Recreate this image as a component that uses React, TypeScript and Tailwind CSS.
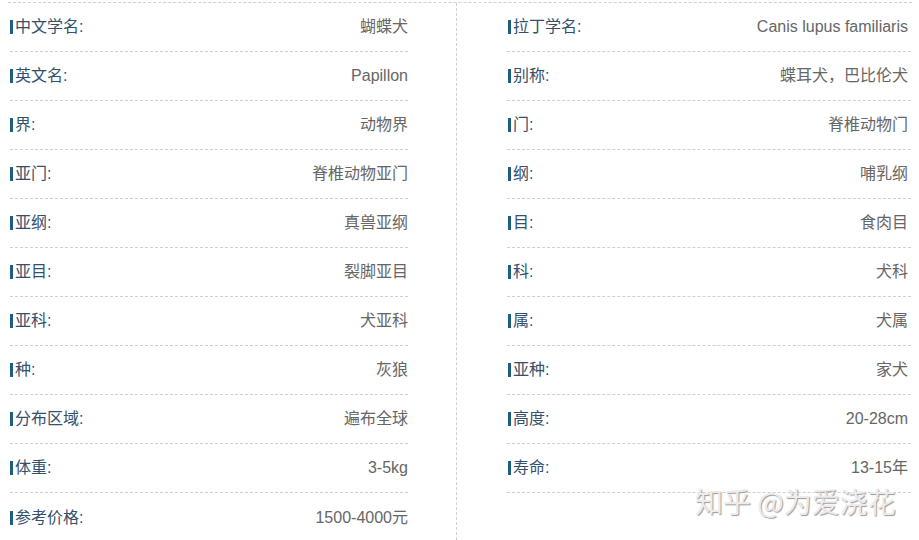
import React from "react";

const left: [string, string][] = [
  ["中文学名", "蝴蝶犬"],
  ["英文名", "Papillon"],
  ["界", "动物界"],
  ["亚门", "脊椎动物亚门"],
  ["亚纲", "真兽亚纲"],
  ["亚目", "裂脚亚目"],
  ["亚科", "犬亚科"],
  ["种", "灰狼"],
  ["分布区域", "遍布全球"],
  ["体重", "3-5kg"],
  ["参考价格", "1500-4000元"],
];

const right: [string, string][] = [
  ["拉丁学名", "Canis lupus familiaris"],
  ["别称", "蝶耳犬，巴比伦犬"],
  ["门", "脊椎动物门"],
  ["纲", "哺乳纲"],
  ["目", "食肉目"],
  ["科", "犬科"],
  ["属", "犬属"],
  ["亚种", "家犬"],
  ["高度", "20-28cm"],
  ["寿命", "13-15年"],
];

function Row({ k, v, last, inset }: { k: string; v: string; last?: boolean; inset?: boolean }) {
  return (
    <div
      className={
        "flex h-[49px] items-center justify-between " +
        (last ? "" : "border-b border-dashed border-[#d0d0d0]")
      }
    >
      <div className={"flex items-center text-[#34506b] " + (inset ? "ml-[1px]" : "")}>
        <span className="mr-[2px] inline-block h-[14px] w-[3px] bg-[#1d5f82]" />
        <span>{k}:</span>
      </div>
      <div className={"text-[#666666] " + (inset ? "mr-[3px]" : "")}>{v}</div>
    </div>
  );
}

export default function App() {
  return (
    <div
      className="relative h-[540px] w-[919px] overflow-hidden bg-white text-[16px]"
      style={{ fontFamily: '"Liberation Sans", "Noto Sans CJK SC", sans-serif' }}
    >
      <div className="ml-[8px] mt-[2px] flex h-[538px] w-[904px] border-t border-dashed border-[#d0d0d0]">
        <div className="w-[449px] border-r border-dashed border-[#d0d0d0] pl-[2px] pr-[48px]">
          {left.map(([k, v], i) => (
            <Row key={k} k={k} v={v} last={i === left.length - 1} />
          ))}
        </div>
        <div className="flex-1 pl-[50px] pr-[1px]">
          {right.map(([k, v]) => (
            <Row key={k} k={k} v={v} inset />
          ))}
        </div>
      </div>
      <div
        className="absolute left-[695px] top-[483px] text-[28px] leading-[36px] text-[#ececec] [text-shadow:1px_1px_1px_#9a9a9a]"
        style={{ fontFamily: '"Noto Sans CJK SC", sans-serif' }}
      >
        知乎 @为爱浇花
      </div>
    </div>
  );
}
